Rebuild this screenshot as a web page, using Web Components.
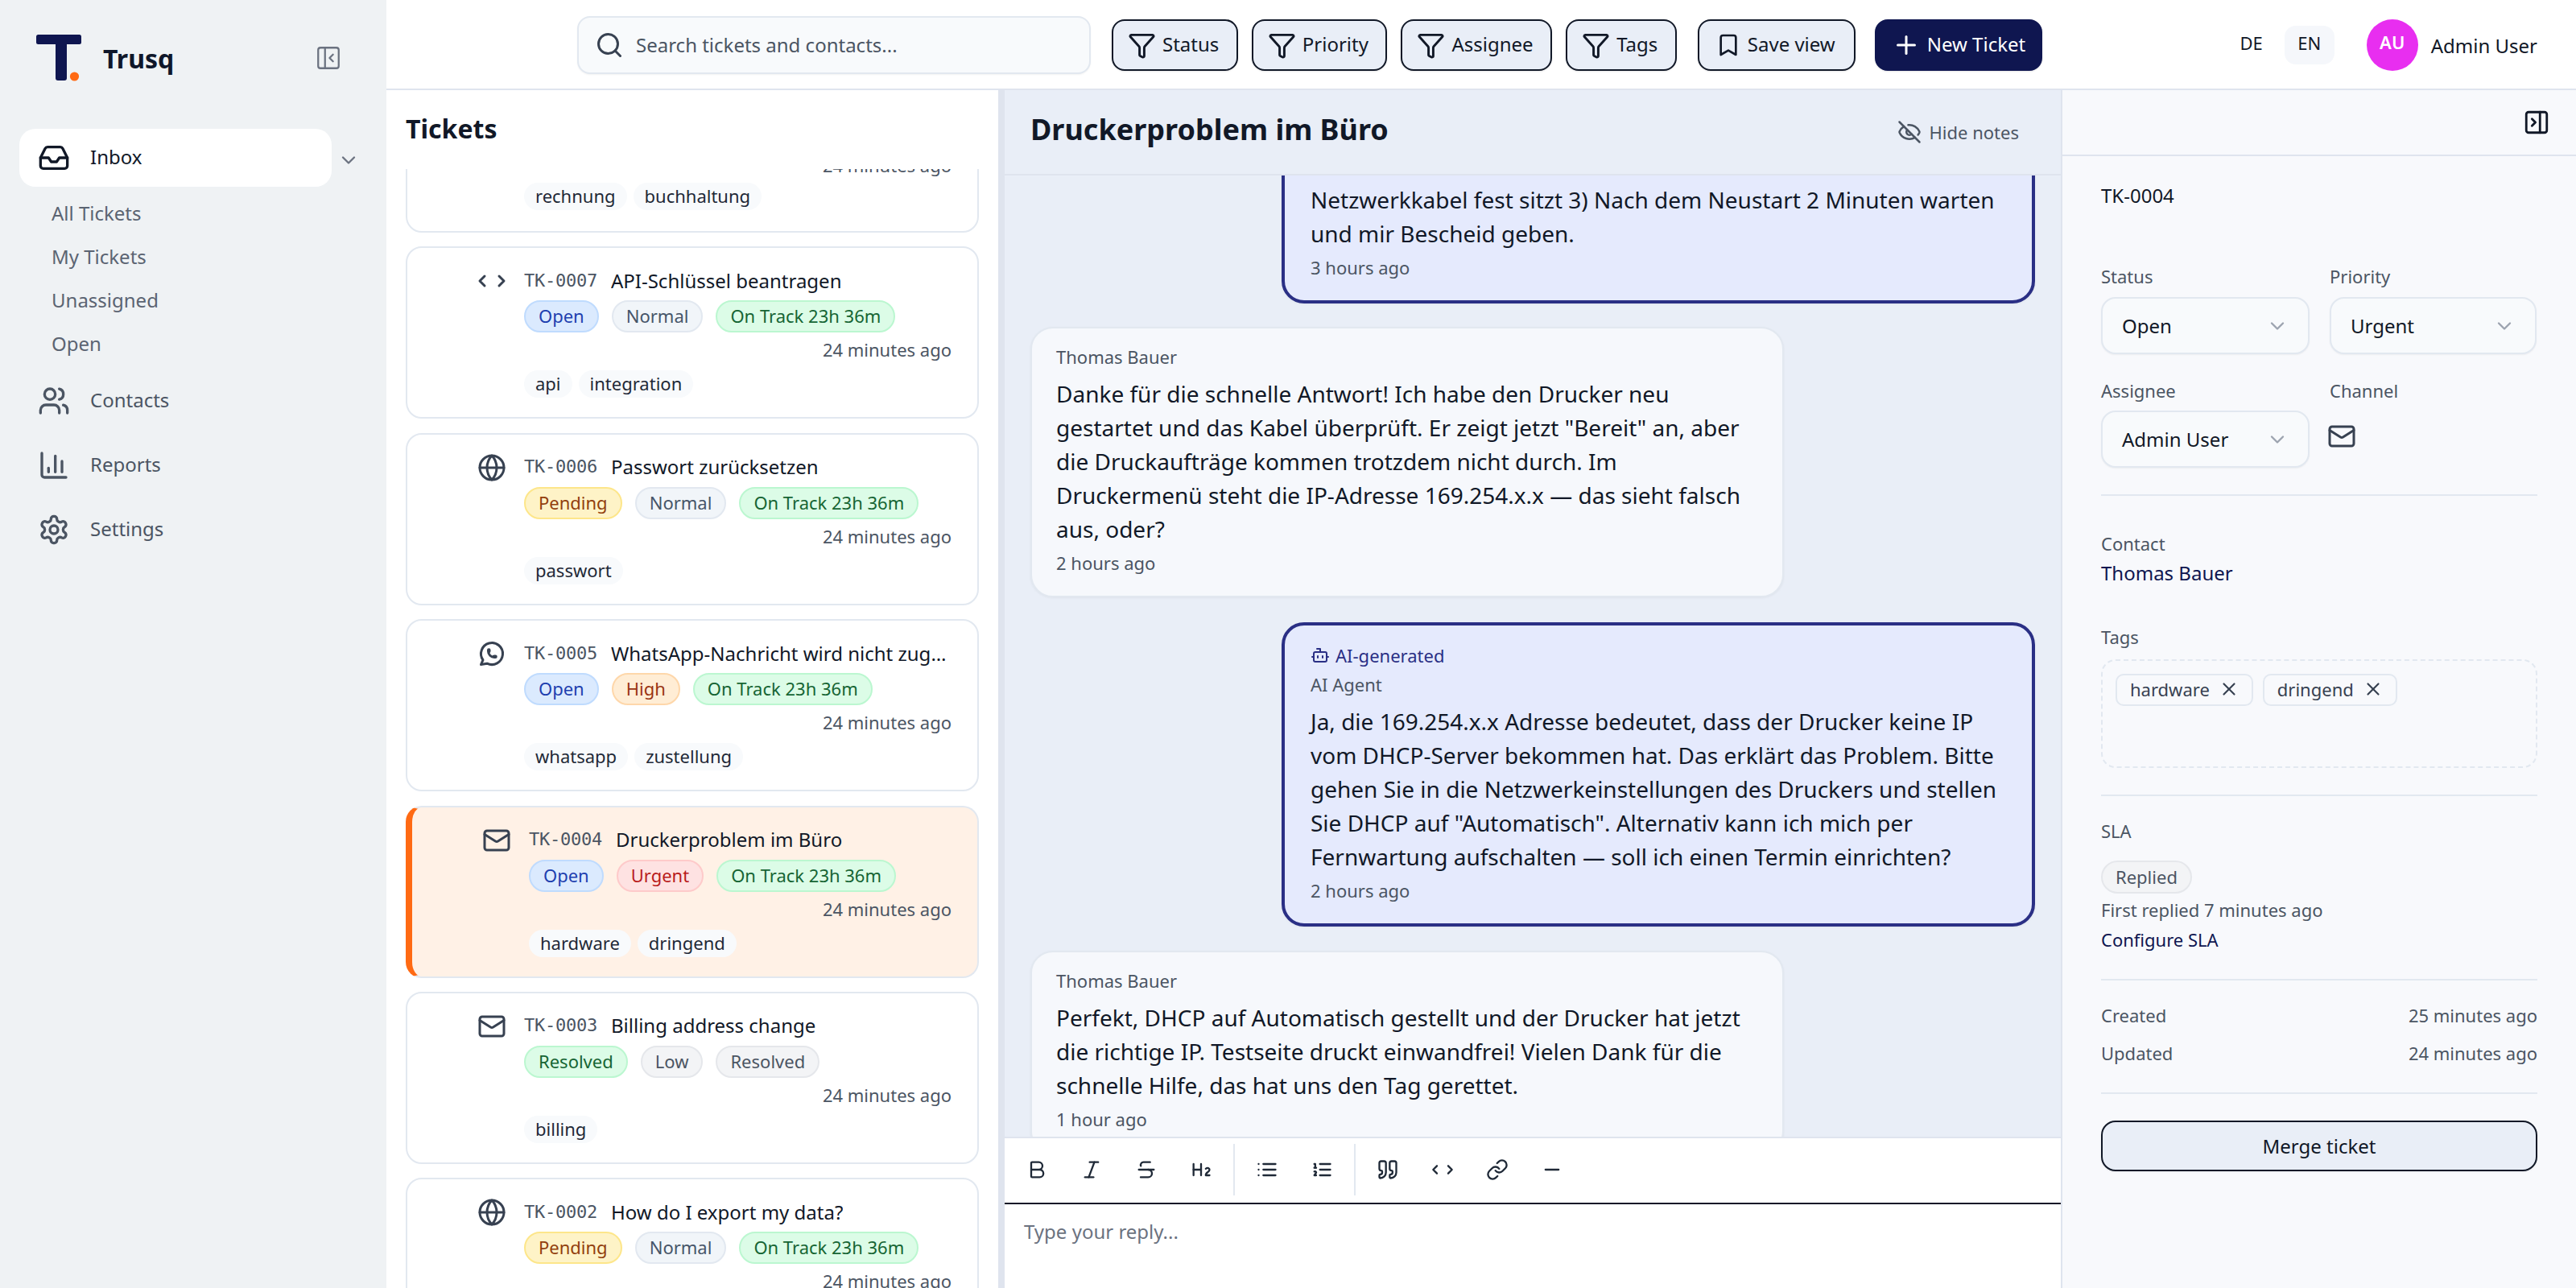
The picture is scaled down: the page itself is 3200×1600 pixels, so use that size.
<!DOCTYPE html>
<html lang="en">
<head>
<meta charset="utf-8">
<title>Trusq</title>
<style>
  html, body { margin: 0; height: 100%; overflow: hidden; background: #fff; font-family: "Noto Sans", sans-serif; color: #111827; }
</style>
</head>
<body>
<app-shell>
  <side-nav slot="nav"></side-nav>
  <top-bar slot="top"></top-bar>
  <ticket-list slot="list">
    <ticket-card partial>
      <tag-chip slot="tags">rechnung</tag-chip><tag-chip slot="tags">buchhaltung</tag-chip>
    </ticket-card>
    <ticket-card code="TK-0007" name="API-Schlüssel beantragen" channel="code">
      <status-pill slot="pills" kind="open">Open</status-pill><status-pill slot="pills" kind="normal">Normal</status-pill><status-pill slot="pills" kind="green">On Track 23h 36m</status-pill>
      <tag-chip slot="tags">api</tag-chip><tag-chip slot="tags">integration</tag-chip>
    </ticket-card>
    <ticket-card code="TK-0006" name="Passwort zurücksetzen" channel="globe">
      <status-pill slot="pills" kind="pending">Pending</status-pill><status-pill slot="pills" kind="normal">Normal</status-pill><status-pill slot="pills" kind="green">On Track 23h 36m</status-pill>
      <tag-chip slot="tags">passwort</tag-chip>
    </ticket-card>
    <ticket-card code="TK-0005" name="WhatsApp-Nachricht wird nicht zugestellt" channel="whatsapp">
      <status-pill slot="pills" kind="open">Open</status-pill><status-pill slot="pills" kind="high">High</status-pill><status-pill slot="pills" kind="green">On Track 23h 36m</status-pill>
      <tag-chip slot="tags">whatsapp</tag-chip><tag-chip slot="tags">zustellung</tag-chip>
    </ticket-card>
    <ticket-card code="TK-0004" name="Druckerproblem im Büro" channel="mail" selected>
      <status-pill slot="pills" kind="open">Open</status-pill><status-pill slot="pills" kind="urgent">Urgent</status-pill><status-pill slot="pills" kind="green">On Track 23h 36m</status-pill>
      <tag-chip slot="tags">hardware</tag-chip><tag-chip slot="tags">dringend</tag-chip>
    </ticket-card>
    <ticket-card code="TK-0003" name="Billing address change" channel="mail">
      <status-pill slot="pills" kind="green">Resolved</status-pill><status-pill slot="pills" kind="low">Low</status-pill><status-pill slot="pills" kind="low">Resolved</status-pill>
      <tag-chip slot="tags">billing</tag-chip>
    </ticket-card>
    <ticket-card code="TK-0002" name="How do I export my data?" channel="globe">
      <status-pill slot="pills" kind="pending">Pending</status-pill><status-pill slot="pills" kind="normal">Normal</status-pill><status-pill slot="pills" kind="green">On Track 23h 36m</status-pill>
    </ticket-card>
  </ticket-list>
  <chat-pane slot="chat">
    <chat-bubble agent clipped when="3 hours ago">Netzwerkkabel fest sitzt 3) Nach dem Neustart 2 Minuten warten und mir Bescheid geben.</chat-bubble>
    <chat-bubble author="Thomas Bauer" when="2 hours ago">Danke für die schnelle Antwort! Ich habe den Drucker neu gestartet und das Kabel überprüft. Er zeigt jetzt "Bereit" an, aber die Druckaufträge kommen trotzdem nicht durch. Im Druckermenü steht die IP-Adresse 169.254.x.x — das sieht falsch aus, oder?</chat-bubble>
    <chat-bubble agent ai author="AI Agent" when="2 hours ago">Ja, die 169.254.x.x Adresse bedeutet, dass der Drucker keine IP vom DHCP-Server bekommen hat. Das erklärt das Problem. Bitte gehen Sie in die Netzwerkeinstellungen des Druckers und stellen Sie DHCP auf "Automatisch". Alternativ kann ich mich per Fernwartung aufschalten — soll ich einen Termin einrichten?</chat-bubble>
    <chat-bubble author="Thomas Bauer" when="1 hour ago" style="margin-top:-1px">Perfekt, DHCP auf Automatisch gestellt und der Drucker hat jetzt die richtige IP. Testseite druckt einwandfrei! Vielen Dank für die schnelle Hilfe, das hat uns den Tag gerettet.</chat-bubble>
  </chat-pane>
  <detail-panel slot="detail"></detail-panel>
</app-shell>

<script>
const ICONS = {
  inbox: '<polyline points="22 12 16 12 14 15 10 15 8 12 2 12"/><path d="M5.45 5.11 2 12v6a2 2 0 0 0 2 2h16a2 2 0 0 0 2-2v-6l-3.45-6.89A2 2 0 0 0 16.76 4H7.24a2 2 0 0 0-1.79 1.11z"/>',
  users: '<path d="M16 21v-2a4 4 0 0 0-4-4H6a4 4 0 0 0-4 4v2"/><circle cx="9" cy="7" r="4"/><path d="M22 21v-2a4 4 0 0 0-3-3.87"/><path d="M16 3.13a4 4 0 0 1 0 7.75"/>',
  chart: '<path d="M3 3v16a2 2 0 0 0 2 2h16"/><path d="M18 17V9"/><path d="M13 17V5"/><path d="M8 17v-3"/>',
  settings: '<path d="M12.22 2h-.44a2 2 0 0 0-2 2v.18a2 2 0 0 1-1 1.73l-.43.25a2 2 0 0 1-2 0l-.15-.08a2 2 0 0 0-2.73.73l-.22.38a2 2 0 0 0 .73 2.73l.15.1a2 2 0 0 1 1 1.72v.51a2 2 0 0 1-1 1.74l-.15.09a2 2 0 0 0-.73 2.73l.22.38a2 2 0 0 0 2.73.73l.15-.08a2 2 0 0 1 2 0l.43.25a2 2 0 0 1 1 1.73V20a2 2 0 0 0 2 2h.44a2 2 0 0 0 2-2v-.18a2 2 0 0 1 1-1.73l.43-.25a2 2 0 0 1 2 0l.15.08a2 2 0 0 0 2.73-.73l.22-.39a2 2 0 0 0-.73-2.73l-.15-.08a2 2 0 0 1-1-1.74v-.5a2 2 0 0 1 1-1.74l.15-.09a2 2 0 0 0 .73-2.73l-.22-.38a2 2 0 0 0-2.73-.73l-.15.08a2 2 0 0 1-2 0l-.43-.25a2 2 0 0 1-1-1.73V4a2 2 0 0 0-2-2z"/><circle cx="12" cy="12" r="3"/>',
  funnel: '<path d="M10 20a1 1 0 0 0 .553.895l2 1A1 1 0 0 0 14 21v-7a2 2 0 0 1 .517-1.341L21.74 4.67A1 1 0 0 0 21 3H3a1 1 0 0 0-.742 1.67l7.225 7.989A2 2 0 0 1 10 14z"/>',
  search: '<circle cx="11" cy="11" r="8"/><path d="m21 21-4.3-4.3"/>',
  bookmark: '<path d="m19 21-7-4-7 4V5a2 2 0 0 1 2-2h10a2 2 0 0 1 2 2v16z"/>',
  plus: '<path d="M5 12h14"/><path d="M12 5v14"/>',
  eyeoff: '<path d="M10.733 5.076a10.744 10.744 0 0 1 11.205 6.575 1 1 0 0 1 0 .696 10.747 10.747 0 0 1-1.444 2.49"/><path d="M14.084 14.158a3 3 0 0 1-4.242-4.242"/><path d="M17.479 17.499a10.75 10.75 0 0 1-15.417-5.151 1 1 0 0 1 0-.696 10.75 10.75 0 0 1 4.446-5.143"/><path d="m2 2 20 20"/>',
  mail: '<rect width="20" height="16" x="2" y="4" rx="2"/><path d="m22 7-8.97 5.7a1.94 1.94 0 0 1-2.06 0L2 7"/>',
  code: '<path d="m18 16 4-4-4-4"/><path d="m6 8-4 4 4 4"/>',
  globe: '<circle cx="12" cy="12" r="10"/><path d="M12 2a14.5 14.5 0 0 0 0 20 14.5 14.5 0 0 0 0-20"/><path d="M2 12h20"/>',
  whatsapp: '<path d="M3 21l1.65-3.8a9 9 0 1 1 3.4 2.9L3 21"/><path d="M9 10a.5.5 0 0 0 1 0V9a.5.5 0 0 0-1 0v1a5 5 0 0 0 5 5h1a.5.5 0 0 0 0-1h-1a.5.5 0 0 0 0 1"/>',
  panelleft: '<rect width="18" height="18" x="3" y="3" rx="2"/><path d="M9 3v18"/><path d="m16 15-3-3 3-3"/>',
  panelright: '<rect width="18" height="18" x="3" y="3" rx="2"/><path d="M15 3v18"/><path d="m8 9 3 3-3 3"/>',
  chevron: '<path d="m6 9 6 6 6-6"/>',
  x: '<path d="M18 6 6 18"/><path d="m6 6 12 12"/>',
  bot: '<path d="M12 8V4H8"/><rect width="16" height="12" x="4" y="8" rx="2"/><path d="M2 14h2"/><path d="M20 14h2"/><path d="M15 13v2"/><path d="M9 13v2"/>',
  bold: '<path d="M6 12h9a4 4 0 0 1 0 8H7a1 1 0 0 1-1-1V5a1 1 0 0 1 1-1h7a4 4 0 0 1 0 8"/>',
  italic: '<line x1="19" x2="10" y1="4" y2="4"/><line x1="14" x2="5" y1="20" y2="20"/><line x1="15" x2="9" y1="4" y2="20"/>',
  strike: '<path d="M16 4H9a3 3 0 0 0-2.83 4"/><path d="M14 12a4 4 0 0 1 0 8H6"/><line x1="4" x2="20" y1="12" y2="12"/>',
  h2: '<path d="M4 12h8"/><path d="M4 18V6"/><path d="M12 18V6"/><path d="M21 18h-4c0-4 4-3 4-6 0-1.5-2-2.5-4-1"/>',
  list: '<path d="M3 12h.01"/><path d="M3 18h.01"/><path d="M3 6h.01"/><path d="M8 12h13"/><path d="M8 18h13"/><path d="M8 6h13"/>',
  listol: '<path d="M10 12h11"/><path d="M10 18h11"/><path d="M10 6h11"/><path d="M4 10h2"/><path d="M4 6h1v4"/><path d="M6 18H4c0-1 2-2 2-3s-1-1.5-2-1"/>',
  quote: '<path d="M16 3a2 2 0 0 0-2 2v6a2 2 0 0 0 2 2 1 1 0 0 1 1 1v1a2 2 0 0 1-2 2 1 1 0 0 0-1 1v2a1 1 0 0 0 1 1 6 6 0 0 0 6-6V5a2 2 0 0 0-2-2z"/><path d="M5 3a2 2 0 0 0-2 2v6a2 2 0 0 0 2 2 1 1 0 0 1 1 1v1a2 2 0 0 1-2 2 1 1 0 0 0-1 1v2a1 1 0 0 0 1 1 6 6 0 0 0 6-6V5a2 2 0 0 0-2-2z"/>',
  link: '<path d="M10 13a5 5 0 0 0 7.54.54l3-3a5 5 0 0 0-7.07-7.07l-1.72 1.71"/><path d="M14 11a5 5 0 0 0-7.54-.54l-3 3a5 5 0 0 0 7.07 7.07l1.71-1.71"/>',
  minus: '<path d="M5 12h14"/>'
};

function icon(name, size, color, sw) {
  return `<svg width="${size}" height="${size}" viewBox="0 0 24 24" fill="none" stroke="${color || 'currentColor'}" stroke-width="${sw || 2}" stroke-linecap="round" stroke-linejoin="round" style="display:block;flex:none">${ICONS[name]}</svg>`;
}

class AppShell extends HTMLElement {
  connectedCallback() {
    this.attachShadow({ mode: 'open' });
    this.shadowRoot.innerHTML = `
      <style>
        :host { display: grid; grid-template-columns: 480px 1fr; width: 3200px; height: 1600px; overflow: hidden; }
        .right { display: flex; flex-direction: column; min-width: 0; height: 1600px; }
        .panes { flex: 1; display: grid; grid-template-columns: 760px 8px 1312px 640px; min-height: 0; }
        .panes > * { min-height: 0; }
        .handle { background: #dfe4ee; }
      </style>
      <slot name="nav"></slot>
      <div class="right">
        <slot name="top"></slot>
        <div class="panes">
          <slot name="list"></slot>
          <div class="handle"></div>
          <slot name="chat"></slot>
          <slot name="detail"></slot>
        </div>
      </div>
    `;
  }
}

class SideNav extends HTMLElement {
  connectedCallback() {
    this.attachShadow({ mode: 'open' });
    this.shadowRoot.innerHTML = `
      <style>
        :host { display: block; background: #eff2f4; height: 1600px; }
        .brand { display: flex; align-items: center; height: 144px; padding: 0 0 0 45px; }
        .brand b { font-size: 32px; font-weight: 700; color: #0f172a; margin-left: 27px; }
        .brand .collapse { margin-left: auto; margin-right: 55px; color: #6b7280; }
        .nav { padding: 16px 0 0 24px; }
        .row { display: flex; align-items: center; }
        .item { display: flex; align-items: center; gap: 25px; width: 388px; height: 72px; box-sizing: border-box; padding-left: 23px; border-radius: 20px; font-size: 24px; color: #4b5563; }
        .item span { padding-bottom: 3px; }
        .item.active { background: #fff; color: #111827; margin-bottom: 6px; }
        .item.tall { height: 80px; }
        .item.active svg { color: #111827; }
        .more { margin-left: 7px; color: #6b7280; }
        .sub { height: 54px; line-height: 54px; padding-left: 40px; font-size: 24px; color: #5b6472; }
      </style>
      <div class="brand">
        <svg width="56" height="58" viewBox="0 0 56 58" style="display:block;flex:none">
          <rect x="0" y="0" width="56" height="12" rx="2.5" fill="#0f1650"/>
          <rect x="24" y="0" width="14" height="57" rx="3" fill="#0f1650"/>
          <circle cx="47.5" cy="52" r="5.6" fill="#ff6a13"/>
        </svg>
        <b>Trusq</b>
        <span class="collapse">${icon('panelleft', 34, 'currentColor', 1.6)}</span>
      </div>
      <div class="nav">
        <div class="row">
          <div class="item active">${icon('inbox', 40)}<span>Inbox</span></div>
          <span class="more">${icon('chevron', 28)}</span>
        </div>
        <div class="sub">All Tickets</div>
        <div class="sub">My Tickets</div>
        <div class="sub">Unassigned</div>
        <div class="sub">Open</div>
        <div class="item tall" style="margin-top:4px">${icon('users', 40)}<span>Contacts</span></div>
        <div class="item tall">${icon('chart', 40)}<span>Reports</span></div>
        <div class="item tall">${icon('settings', 40)}<span>Settings</span></div>
      </div>
    `;
  }
}

class TopBar extends HTMLElement {
  connectedCallback() {
    this.attachShadow({ mode: 'open' });
    const filter = (label) => `<div class="btn">${icon('funnel', 35)}<span>${label}</span></div>`;
    this.shadowRoot.innerHTML = `
      <style>
        :host { display: flex; align-items: center; box-sizing: border-box; height: 112px; background: #fff; border-bottom: 2px solid #dfe4ee; padding: 2px 48px 0 237px; font-size: 24px; color: #111827; }
        .search { display: flex; align-items: center; gap: 15px; box-sizing: border-box; width: 638px; height: 72px; padding-left: 20px; border: 2px solid #e2e8f0; border-radius: 16px; background: #f8fafc; color: #4b5563; box-shadow: 0 1px 2px rgba(0,0,0,.05); margin-right: 26px; }
        .search span { padding-bottom: 2px; }
        .btn { display: flex; align-items: center; gap: 8px; box-sizing: border-box; height: 64px; padding: 0 21.5px 0 18px; border: 2px solid #111827; border-radius: 16px; background: #e9eef7; margin-right: 17px; box-shadow: 0 1px 2px rgba(0,0,0,.1); white-space: nowrap; }
        .btn span { padding-bottom: 3px; }
        .btn.save { margin-left: 9px; margin-right: 24px; padding-right: 23px; padding-left: 20px; }
        .btn.primary { background: #0f1650; border-color: #0f1650; color: #fff; margin-right: 0; padding: 0 19px; }
        .lang { margin-left: auto; display: flex; align-items: center; font-size: 22px; gap: 27px; margin-right: 40px; }
        .lang span.on { display: flex; align-items: center; justify-content: center; box-sizing: border-box; width: 62px; height: 48px; border-radius: 14px; background: #f5f7fb; padding-bottom: 6px; }
        .lang span.off { padding-bottom: 6px; }
        .avatar { display: flex; align-items: center; justify-content: center; width: 64px; height: 64px; border-radius: 50%; background: #e82ef0; color: #fff; font-size: 22px; font-weight: 600; margin-right: 16px; padding-bottom: 8px; box-sizing: border-box; }
      </style>
      <div class="search">${icon('search', 36, '#374151')}<span>Search tickets and contacts...</span></div>
      ${filter('Status')}${filter('Priority')}${filter('Assignee')}${filter('Tags')}
      <div class="btn save">${icon('bookmark', 32)}<span>Save view</span></div>
      <div class="btn primary">${icon('plus', 36)}<span>New Ticket</span></div>
      <div class="lang"><span class="off">DE</span><span class="on">EN</span></div>
      <div class="avatar">AU</div>
      <span>Admin User</span>
    `;
  }
}

class TicketList extends HTMLElement {
  connectedCallback() {
    this.attachShadow({ mode: 'open' });
    this.shadowRoot.innerHTML = `
      <style>
        :host { display: flex; flex-direction: column; background: #fff; overflow: hidden; height: 1488px; }
        h2 { margin: 0; height: 98px; box-sizing: border-box; padding: 26px 24px 0; font-size: 32px; line-height: 44px; font-weight: 700; color: #111827; flex: none; }
        .scroll { flex: 1; min-height: 0; overflow: hidden; padding: 0 24px; display: flex; flex-direction: column; gap: 17.4px; }
      </style>
      <h2>Tickets</h2>
      <div class="scroll"><slot></slot></div>
    `;
  }
}

class TicketCard extends HTMLElement {
  connectedCallback() {
    this.attachShadow({ mode: 'open' });
    const partial = this.hasAttribute('partial');
    const head = partial ? '' : `
      <div class="head">
        <span class="channel">${icon(this.getAttribute('channel'), 36, '#374151')}</span>
        <span class="code">${this.getAttribute('code')}</span>
        <span class="name">${this.getAttribute('name')}</span>
      </div>
      <div class="pills"><slot name="pills"></slot></div>`;
    this.shadowRoot.innerHTML = `
      <style>
        :host { display: block; flex: none; box-sizing: border-box; width: 712px; height: 214px; border: 2px solid #e2e8f0; border-radius: 20px; background: #fff; padding: 24px 32px 0 145px; font-size: 22px; color: #111827; }
        :host([partial]) { margin-top: -40px; height: 119px; padding-top: 12px; }
        :host([partial]) .tags { margin-top: 8px; }
        :host([selected]) { background: #fff1e6; border-left: 8px solid #ff6a13; padding-left: 145px; }
        .head { position: relative; display: flex; align-items: center; height: 32px; gap: 17px; }
        .channel { position: absolute; left: -58px; top: -1px; }
        .code { font-family: "DejaVu Sans Mono", monospace; color: #4b5563; flex: none; font-size: 22px; letter-spacing: -.25px; }
        .name { font-size: 24px; color: #111827; white-space: nowrap; overflow: hidden; text-overflow: ellipsis; min-width: 0; }
        .pills { display: flex; gap: 16px; margin-top: 9px; height: 40px; }
        .time { margin-top: 7px; height: 28px; line-height: 28px; text-align: right; color: #4b5563; }
        .tags { display: flex; gap: 8px; margin-top: 12px; }
      </style>
      ${head}
      <div class="time">24 minutes ago</div>
      <div class="tags"><slot name="tags"></slot></div>
    `;
  }
}

class StatusPill extends HTMLElement {
  connectedCallback() {
    this.attachShadow({ mode: 'open' });
    this.shadowRoot.innerHTML = `
      <style>
        :host { display: flex; align-items: center; box-sizing: border-box; height: 40px; padding: 0 16px; border: 2px solid; border-radius: 999px; font-size: 22px; white-space: nowrap; padding-bottom: 2px; }
        :host([kind=open]) { background: #dbeafe; border-color: #bfdbfe; color: #1e40af; }
        :host([kind=normal]) { background: #f1f5f9; border-color: #e2e8f0; color: #475569; }
        :host([kind=green]) { background: #dcfce7; border-color: #bbf7d0; color: #166534; }
        :host([kind=pending]) { background: #fef3c7; border-color: #fde68a; color: #92400e; }
        :host([kind=high]) { background: #ffedd5; border-color: #fed7aa; color: #9a3412; }
        :host([kind=urgent]) { background: #fee2e2; border-color: #fecaca; color: #b91c1c; }
        :host([kind=low]) { background: #f3f4f6; border-color: #e5e7eb; color: #4b5563; }
      </style>
      <slot></slot>
    `;
  }
}

class TagChip extends HTMLElement {
  connectedCallback() {
    this.attachShadow({ mode: 'open' });
    this.shadowRoot.innerHTML = `
      <style>
        :host { display: flex; align-items: center; box-sizing: border-box; height: 34px; padding: 0 14px 2px; border-radius: 999px; background: #f8fafc; font-size: 22px; color: #1f2937; white-space: nowrap; }
      </style>
      <slot></slot>
    `;
  }
}

class ChatPane extends HTMLElement {
  connectedCallback() {
    this.attachShadow({ mode: 'open' });
    this.shadowRoot.innerHTML = `
      <style>
        :host { display: flex; flex-direction: column; height: 1488px; min-width: 0; background: #e9eef7; overflow: hidden; }
        .head { flex: none; display: flex; align-items: center; box-sizing: border-box; height: 106px; padding: 0 32px 8px; border-bottom: 2px solid #dfe4ee; }
        h1 { margin: 0; font-size: 36px; font-weight: 700; color: #111827; }
        .notes { margin-left: auto; display: flex; align-items: center; gap: 10px; font-size: 22px; color: #4b5563; margin-right: 20px; margin-top: 8px; }
        .msgs { flex: 1; min-height: 0; overflow: hidden; display: flex; flex-direction: column; gap: 31px; padding: 0 32px; }
      </style>
      <div class="head">
        <h1>Druckerproblem im Büro</h1>
        <div class="notes">${icon('eyeoff', 30)}<span>Hide notes</span></div>
      </div>
      <div class="msgs"><slot></slot></div>
      <reply-editor></reply-editor>
    `;
  }
}

class ChatBubble extends HTMLElement {
  connectedCallback() {
    this.attachShadow({ mode: 'open' });
    const author = this.getAttribute('author');
    const ai = this.hasAttribute('ai') ? `<div class="ai">${icon('bot', 24)}<span>AI-generated</span></div>` : '';
    this.shadowRoot.innerHTML = `
      <style>
        :host { display: block; flex: none; box-sizing: border-box; width: 936px; padding: 20px 30px 26px; border: 2px solid #e2e8f0; border-radius: 28px; background: #f6f8fc; box-shadow: 0 1px 3px rgba(0,0,0,.05); color: #111827; }
        :host([agent]) { align-self: flex-end; border: 4px solid #2a2f85; background: #e5eafd; padding-left: 32px; padding-right: 32px; }
        :host([clipped]) { margin-top: -75px; margin-bottom: -2px; padding-top: 80px; }
        .ai { display: flex; align-items: center; gap: 7px; height: 34px; font-size: 22px; color: #2a2f85; margin-bottom: 4px; }
        .who { height: 30px; line-height: 30px; font-size: 22px; color: #4b5563; margin-bottom: 10px; }
        .text { font-size: 28px; line-height: 42px; }
        .when { height: 30px; line-height: 30px; margin-top: 6px; font-size: 22px; color: #4b5563; }
      </style>
      ${ai}
      ${author ? `<div class="who">${author}</div>` : ''}
      <div class="text"><slot></slot></div>
      <div class="when">${this.getAttribute('when')}</div>
    `;
  }
}

class ReplyEditor extends HTMLElement {
  connectedCallback() {
    this.attachShadow({ mode: 'open' });
    const tool = (name, size) => `<span class="tool">${icon(name, size || 28)}</span>`;
    this.shadowRoot.innerHTML = `
      <style>
        :host { flex: none; display: block; height: 188px; background: #fff; border-top: 2px solid #dfe4ee; box-sizing: border-box; }
        .bar { display: flex; align-items: center; box-sizing: border-box; height: 82px; padding: 0 6px 2px; border-bottom: 2px solid #111827; color: #1f2937; }
        .tool { display: flex; align-items: center; justify-content: center; width: 68px; height: 64px; }
        .sep { width: 2px; height: 64px; background: #e2e8f0; margin: 0 6px; }
        .input { padding: 17px 24px; font-size: 24px; line-height: 34px; color: #6b7280; }
      </style>
      <div class="bar">
        ${tool('bold')}${tool('italic')}${tool('strike')}${tool('h2')}<span class="sep"></span>
        ${tool('list')}${tool('listol')}<span class="sep"></span>
        ${tool('quote')}${tool('code')}${tool('link')}${tool('minus')}
      </div>
      <div class="input">Type your reply...</div>
    `;
  }
}

class FieldSelect extends HTMLElement {
  connectedCallback() {
    this.attachShadow({ mode: 'open' });
    this.shadowRoot.innerHTML = `
      <style>
        :host { display: flex; align-items: center; justify-content: space-between; box-sizing: border-box; height: 71px; padding: 0 24px; border: 2px solid #e2e8f0; border-radius: 18px; background: #f8fafc; font-size: 24px; color: #111827; box-shadow: 0 1px 2px rgba(0,0,0,.05); }
      </style>
      <slot></slot>
      ${icon('chevron', 28, '#9ca3af')}
    `;
  }
}

class DetailPanel extends HTMLElement {
  connectedCallback() {
    this.attachShadow({ mode: 'open' });
    const chip = (t) => `<span class="chip">${t}${icon('x', 26, '#374151')}</span>`;
    this.shadowRoot.innerHTML = `
      <style>
        :host { display: block; box-sizing: border-box; height: 1488px; background: #f8f9fc; border-left: 2px solid #dfe4ee; color: #111827; overflow: hidden; }
        .top { display: flex; align-items: center; justify-content: flex-end; box-sizing: border-box; height: 82px; padding-right: 32px; border-bottom: 2px solid #dfe4ee; color: #111827; }
        .body { padding: 32px 48px 0; }
        .lab { font-size: 22px; line-height: 30px; color: #4b5563; }
        .id { font-size: 24px; line-height: 34px; }
        .grid { display: grid; grid-template-columns: 259px 257px; column-gap: 25px; margin-top: 68px; }
        .grid .lab { margin-bottom: 11px; }
        .grid .r2 { margin-top: 30px; }
        .grid .lab.r2 { margin-bottom: 10px; }
        hr { border: 0; height: 2px; background: #e2e8f0; margin: 0; }
        .val { font-size: 24px; line-height: 34px; color: #0f1650; margin-top: 5px; }
        .box { box-sizing: border-box; height: 135px; margin-top: 13px; padding: 16px; border: 2px dashed #e2e8f0; border-radius: 18px; display: flex; align-items: flex-start; gap: 12px; }
        .chip { display: flex; align-items: center; gap: 11px; box-sizing: border-box; height: 40px; padding: 0 15px 2px 16px; border: 2px solid #e2e8f0; border-radius: 10px; font-size: 22px; color: #374151; }
        .sla { display: inline-flex; align-items: center; box-sizing: border-box; height: 41px; padding: 0 16px 2px; border: 2px solid #e5e7eb; border-radius: 999px; background: #f3f4f6; font-size: 22px; color: #4b5563; }
        .line { font-size: 22px; line-height: 30px; }
        .meta { display: flex; justify-content: space-between; font-size: 22px; line-height: 30px; color: #4b5563; }
        .merge { display: flex; align-items: center; justify-content: center; box-sizing: border-box; height: 63px; margin-top: 33px; border: 2px solid #111827; border-radius: 18px; background: #e9eef7; font-size: 24px; box-shadow: 0 1px 2px rgba(0,0,0,.08); }
      </style>
      <div class="top">${icon('panelright', 34)}</div>
      <div class="body">
        <div class="id">TK-0004</div>
        <div class="grid">
          <div class="lab">Status</div><div class="lab">Priority</div>
          <field-select>Open</field-select><field-select>Urgent</field-select>
          <div class="lab r2">Assignee</div><div class="lab r2">Channel</div>
          <field-select>Admin User</field-select><div style="padding-top:14px;margin-left:-3px">${icon('mail', 36, '#374151')}</div>
        </div>
        <hr style="margin-top:33px">
        <div class="lab" style="margin-top:44px">Contact</div>
        <div class="val">Thomas Bauer</div>
        <div class="lab" style="margin-top:47px">Tags</div>
        <div class="box">${chip('hardware')}${chip('dringend')}</div>
        <hr style="margin-top:33px">
        <div class="lab" style="margin-top:28px">SLA</div>
        <div style="margin-top:22px;height:41px"><span class="sla">Replied</span></div>
        <div class="line" style="margin-top:5px;color:#4b5563">First replied 7 minutes ago</div>
        <div class="line" style="margin-top:7px;color:#0f1650">Configure SLA</div>
        <hr style="margin-top:34px">
        <div class="meta" style="margin-top:28px"><span>Created</span><span>25 minutes ago</span></div>
        <div class="meta" style="margin-top:17px"><span>Updated</span><span>24 minutes ago</span></div>
        <hr style="margin-top:34px">
        <div class="merge">Merge ticket</div>
      </div>
    `;
  }
}

customElements.define('app-shell', AppShell);
customElements.define('side-nav', SideNav);
customElements.define('top-bar', TopBar);
customElements.define('ticket-list', TicketList);
customElements.define('ticket-card', TicketCard);
customElements.define('status-pill', StatusPill);
customElements.define('tag-chip', TagChip);
customElements.define('chat-pane', ChatPane);
customElements.define('chat-bubble', ChatBubble);
customElements.define('reply-editor', ReplyEditor);
customElements.define('field-select', FieldSelect);
customElements.define('detail-panel', DetailPanel);
</script>
</body>
</html>
